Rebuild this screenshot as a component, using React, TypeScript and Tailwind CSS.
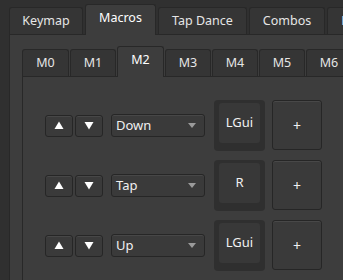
const font = { fontFamily: '"Noto Sans", "DejaVu Sans", sans-serif' };

function Tab({ label, w, active }: { label: string; w: number; active?: boolean }) {
    return <div
        className={`flex items-center justify-center shrink-0 border border-b-0 rounded-t-[3px] text-[12.5px] ${active ? 'h-[31px] bg-[#3d3d3d] border-[#282828] text-white pb-[4px] -mb-px relative z-10' : 'h-[27px] bg-[#353535] border-[#282828] text-[#e6e6e6] pt-[1px]'}`}
        style={{ width: w }}>
        {label}
    </div>
}

function Arrow({ down }: { down?: boolean }) {
    return <button className="w-[28px] h-[22px] flex items-center justify-center bg-[#3a3a3a] border border-[#262626] rounded-[3px] shadow-[inset_0_1px_0_#474747]">
        <svg width="10" height="9" viewBox="0 0 10 9">
            {down ? <polygon points="0.5,1 9.5,1 5,8.5" fill="#ffffff" /> : <polygon points="5,0.5 9.5,8 0.5,8" fill="#ffffff" />}
        </svg>
    </button>
}

function Row({ action, keyLabel }: { action: string; keyLabel: string }) {
    return <div className="flex items-center h-[51px]">
        <div className="flex gap-[2px]">
            <Arrow />
            <Arrow down />
        </div>
        <div className="ml-[8px] w-[94px] h-[23px] flex items-center justify-between pl-[4px] pr-[8px] bg-[#3a3a3a] border border-[#262626] rounded-[3px] shadow-[inset_0_1px_0_#474747] text-[13px] text-[#f0f0f0]">
            <span>{action}</span>
            <svg width="8" height="5" viewBox="0 0 8 5"><polygon points="0,0 8,0 4,5" fill="#9a9a9a" /></svg>
        </div>
        <div className="ml-[9px] w-[51px] h-[51px] bg-[#2f2f2f] rounded-[4px] px-[5px] pt-[3px]">
            <div className="w-full h-[40px] bg-[#383838] rounded-[3px] flex items-center justify-center text-[13px] text-[#f0f0f0]">
                {keyLabel}
            </div>
        </div>
        <button className="ml-[7px] w-[50px] h-[50px] -mt-[1px] bg-[#3a3a3a] border border-[#262626] rounded-[3px] shadow-[inset_0_1px_0_#484848] text-[14px] text-[#f0f0f0] flex items-center justify-center">
            +
        </button>
    </div>
}

export default function App() {
    return <div className="w-[343px] h-[280px] bg-[#303030] overflow-hidden pt-[4px] pl-[9px]" style={font}>
        <div className="flex items-end gap-[2px] h-[30px]">
            <Tab label="Keymap" w={74} />
            <Tab label="Macros" w={71} active />
            <Tab label="Tap Dance" w={89} />
            <Tab label="Combos" w={76} />
            <Tab label="Key Overrides" w={110} />
        </div>
        <div className="w-[400px] h-[300px] bg-[#3d3d3d] border border-[#282828] pt-[11px] pl-[12px]">
            <div className="flex items-end gap-[1px] h-[30px]">
                <Tab label="M0" w={47} />
                <Tab label="M1" w={46} />
                <Tab label="M2" w={47} active />
                <Tab label="M3" w={46} />
                <Tab label="M4" w={46} />
                <Tab label="M5" w={46} />
                <Tab label="M6" w={46} />
            </div>
            <div className="h-[250px] bg-[#3d3d3d] border border-[#282828] pt-[23px] pl-[22px] flex flex-col gap-[9px]">
                <Row action="Down" keyLabel="LGui" />
                <Row action="Tap" keyLabel="R" />
                <Row action="Up" keyLabel="LGui" />
            </div>
        </div>
    </div>
}
